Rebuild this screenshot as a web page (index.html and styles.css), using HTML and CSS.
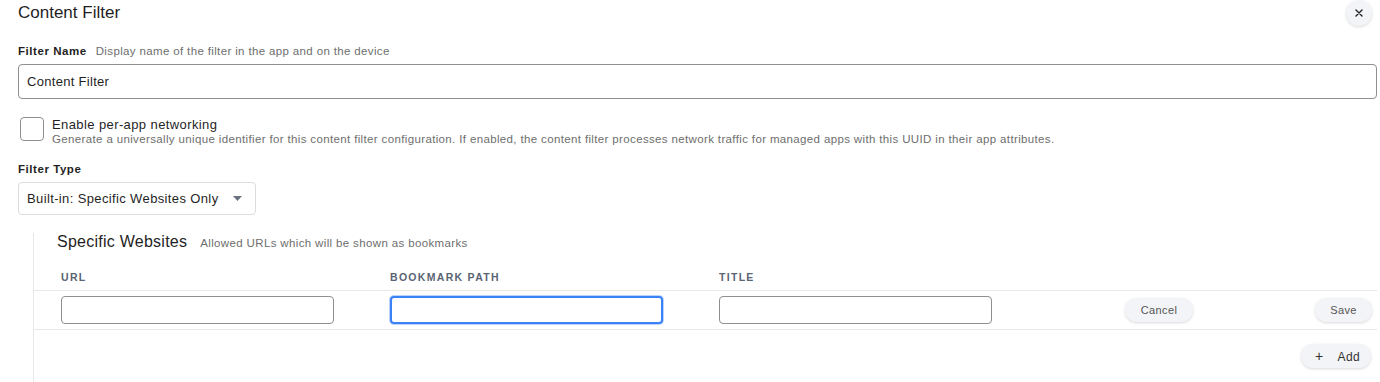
FILE: index.html
```html
<!DOCTYPE html>
<html lang="en">
<head>
  <meta charset="UTF-8" />
  <title>Content Filter</title>
  <link rel="stylesheet" href="styles.css">
</head>
<body>
  <section class="panel">
    <header class="panel-head">
      <h1>Content Filter</h1>
      <button class="close-btn" aria-label="Close">
        <svg width="8" height="8" viewBox="0 0 8 8"><path d="M1 1L7 7M7 1L1 7" stroke="#222" stroke-width="1.4" stroke-linecap="round"/></svg>
      </button>
    </header>

    <div class="field">
      <div class="label"><b>Filter Name</b><span class="hint">Display name of the filter in the app and on the device</span></div>
      <input class="text-input" type="text" value="Content Filter" />
    </div>

    <label class="check-row">
      <span class="checkbox"></span>
      <span class="check-text">
        <span class="check-title">Enable per-app networking</span>
        <span class="hint">Generate a universally unique identifier for this content filter configuration. If enabled, the content filter processes network traffic for managed apps with this UUID in their app attributes.</span>
      </span>
    </label>

    <div class="field">
      <div class="label"><b>Filter Type</b></div>
      <div class="select">
        <span>Built-in: Specific Websites Only</span>
        <svg width="9" height="5" viewBox="0 0 9 5"><path d="M0 0H9L4.5 5Z" fill="#6b7280"/></svg>
      </div>
    </div>

    <div class="sub">
      <div class="sub-head">
        <h2>Specific Websites</h2>
        <span class="hint">Allowed URLs which will be shown as bookmarks</span>
      </div>
      <div class="grid head-row">
        <span>URL</span>
        <span>Bookmark Path</span>
        <span>Title</span>
        <span></span>
        <span></span>
      </div>
      <div class="grid data-row">
        <input class="cell-input" type="text" />
        <input class="cell-input focused" type="text" />
        <input class="cell-input" type="text" />
        <button class="pill cancel">Cancel</button>
        <button class="pill save">Save</button>
      </div>
      <div class="add-row">
        <button class="pill add"><span class="plus">+</span>Add</button>
      </div>
    </div>
  </section>
</body>
</html>
```

FILE: styles.css
```css
:root {
  --text: #1f1f1f;
  --muted: #6e6e6e;
  --line: #e8e8e8;
  --slate: #5b6475;
  --pill: #f3f4f7;
  --focus: #3b82f6;
}
html, body {
  margin: 0;
  padding: 0;
  background: #fff;
  color: var(--text);
  font-family: 'Liberation Sans', Arial, sans-serif;
}
.panel {
  padding: 0 3px 0 18px;
}
.panel-head {
  display: flex;
  justify-content: space-between;
  align-items: flex-start;
  height: 40px;
}
.panel-head h1 {
  margin: 3px 0 0;
  font-size: 17px;
  font-weight: normal;
}
.close-btn {
  width: 26px;
  height: 26px;
  margin: 0 5px 0 0;
  border: none;
  border-radius: 50%;
  background: var(--pill);
  box-shadow: 0 1px 3px rgba(0,0,0,0.15);
  display: flex;
  align-items: center;
  justify-content: center;
  padding: 0;
}
.field {
  display: flex;
  flex-direction: column;
}
.label {
  font-size: 11.5px;
  height: 24px;
  line-height: 22px;
}
.label b {
  letter-spacing: 0.55px;
}
.hint {
  color: var(--muted);
  font-size: 11.5px;
  letter-spacing: 0.36px;
}
.label .hint {
  margin-left: 9px;
}
.text-input {
  height: 35px;
  box-sizing: border-box;
  border: 1px solid #8f8f8f;
  border-radius: 4px;
  padding: 0 8px;
  font-family: inherit;
  font-size: 13px;
  letter-spacing: 0.3px;
  color: var(--text);
  outline: none;
}
.check-row {
  display: flex;
  gap: 8px;
  margin: 17px 0 0 2px;
  height: 42px;
}
.checkbox {
  width: 24px;
  height: 24px;
  box-sizing: border-box;
  border: 1px solid #8f8f8f;
  border-radius: 4px;
  flex: none;
  margin-top: 1px;
}
.check-text {
  display: flex;
  flex-direction: column;
}
.check-title {
  font-size: 13px;
  line-height: 17px;
  letter-spacing: 0.4px;
}
.select {
  width: 238px;
  height: 33px;
  box-sizing: border-box;
  border: 1px solid #dcdcdc;
  border-radius: 4px;
  display: flex;
  align-items: center;
  justify-content: space-between;
  padding: 0 13px 0 8px;
  font-size: 13px;
  letter-spacing: 0.37px;
}
.sub {
  margin: 18px 0 0 15px;
  border-left: 1px solid var(--line);
  padding-bottom: 20px;
}
.sub-head {
  display: flex;
  align-items: baseline;
  gap: 13px;
  padding: 0 0 0 23px;
  height: 35px;
}
.sub-head h2 {
  margin: 0;
  font-size: 16px;
  font-weight: normal;
  letter-spacing: 0.25px;
}
.grid {
  display: grid;
  grid-template-columns: 273px 273px 273px 1fr 57px;
  column-gap: 56px;
  padding: 0 5px 0 27px;
  align-items: center;
}
.head-row {
  box-sizing: border-box;
  height: 23px;
  padding-top: 3px;
  border-bottom: 1px solid var(--line);
  font-size: 10.5px;
  font-weight: bold;
  text-transform: uppercase;
  letter-spacing: 1.3px;
  color: var(--slate);
  align-items: start;
}
.data-row {
  height: 38px;
  border-bottom: 1px solid var(--line);
}
.cell-input {
  height: 28px;
  box-sizing: border-box;
  border: 1px solid #8f8f8f;
  border-radius: 4px;
  outline: none;
  width: 100%;
}
.cell-input.focused {
  border: 2px solid var(--focus);
  box-shadow: 0 0 0 1px rgba(59,130,246,0.35);
}
.pill {
  height: 24px;
  border: none;
  border-radius: 12px;
  background: var(--pill);
  box-shadow: 0 1px 3px rgba(0,0,0,0.15);
  font-family: inherit;
  font-size: 11px;
  letter-spacing: 0.4px;
  color: #555;
  padding: 0 14px;
}
.cancel {
  justify-self: end;
  width: 68px;
  margin-right: 66px;
}
.save {
  justify-self: end;
  width: 57px;
}
.add-row {
  display: flex;
  justify-content: flex-end;
  padding: 14px 6px 0 0;
}
.add {
  width: 70px;
  color: #333;
  font-size: 12px;
}
.plus {
  margin-right: 14px;
  font-size: 14px;
}
```
